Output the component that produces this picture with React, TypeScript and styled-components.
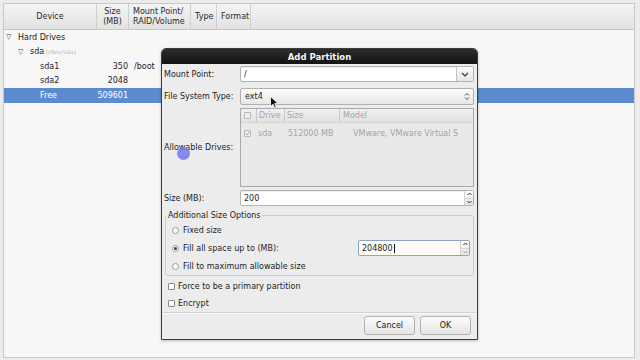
import React from "react";
import styled, { createGlobalStyle } from "styled-components";

const GlobalStyle = createGlobalStyle`
  html, body {
    margin: 0;
    padding: 0;
    background: #ececec;
    font-family: "DejaVu Sans", "Noto Sans", sans-serif;
    font-size: 8px;
    color: #1c1c1c;
  }
`;

const Screen = styled.div`
  position: relative;
  width: 640px;
  height: 360px;
  overflow: hidden;
  padding: 3px 5px 2px 3px;
  box-sizing: border-box;
`;

const Tree = styled.div`
  height: 100%;
  border: 1px solid #c8c8c8;
  background: #f7f7f7;
  box-sizing: border-box;
`;

const COLS = "93px 32px 62px 26px 34px 1fr";

const Header = styled.div`
  display: grid;
  grid-template-columns: ${COLS};
  height: 25px;
  background: linear-gradient(#f4f4f4, #e2e2e2);
  border-bottom: 1px solid #c6c6c6;
`;

const HeadCell = styled.div<{ $center?: boolean }>`
  display: flex;
  align-items: center;
  justify-content: ${({ $center }) => ($center ? "center" : "flex-start")};
  text-align: ${({ $center }) => ($center ? "center" : "left")};
  padding-left: ${({ $center }) => ($center ? "0" : "4px")};
  border-right: 1px solid #cfcfcf;
  line-height: 10px;
  color: #2a2a2a;
  &:last-child {
    border-right: none;
  }
`;

const Row = styled.div<{ $selected?: boolean }>`
  display: grid;
  grid-template-columns: ${COLS};
  height: 14.5px;
  align-items: center;
  background: ${({ $selected }) => ($selected ? "#5c8ccf" : "transparent")};
  color: ${({ $selected }) => ($selected ? "#ffffff" : "#1c1c1c")};
`;

const Name = styled.div<{ $indent: number }>`
  display: flex;
  align-items: center;
  gap: 5px;
  padding-left: ${({ $indent }) => $indent}px;
  white-space: nowrap;
`;

const Expander = styled.span`
  font-size: 7px;
  color: #444;
  width: 7px;
`;

const Dim = styled.span`
  color: #b8b8b8;
  font-size: 6px;
  margin-left: -1px;
`;

const Num = styled.div`
  text-align: right;
  padding-right: 1px;
`;

const Mount = styled.div`
  padding-left: 5px;
`;

/* dialog */

const Dialog = styled.div`
  position: absolute;
  left: 161px;
  top: 48px;
  width: 317px;
  height: 292px;
  box-sizing: border-box;
  border: 1px solid #3c3c3c;
  border-radius: 5px 5px 0 0;
  background: #ececec;
  display: flex;
  flex-direction: column;
  box-shadow: 0 1px 3px rgba(0, 0, 0, 0.25);
`;

const TitleBar = styled.div`
  height: 15px;
  background: linear-gradient(#2c2c2c, #141414);
  color: #f4f4f4;
  font-weight: bold;
  font-size: 8.5px;
  display: flex;
  align-items: center;
  justify-content: center;
  border-radius: 4px 4px 0 0;
`;

const Body = styled.div`
  flex: 1;
  padding: 2px 3px 0 2px;
  display: flex;
  flex-direction: column;
`;

const FieldRow = styled.div<{ $h: number; $mt?: number }>`
  display: grid;
  grid-template-columns: 76px 1fr;
  align-items: center;
  height: ${({ $h }) => $h}px;
  margin-top: ${({ $mt }) => $mt ?? 0}px;
`;

const Label = styled.div`
  white-space: nowrap;
`;

const Entry = styled.div`
  height: 100%;
  display: flex;
  box-sizing: border-box;
  border: 1px solid #b4b4b4;
  border-radius: 2px;
  background: #ffffff;
  box-shadow: inset 0 1px 1px rgba(0, 0, 0, 0.08);
`;

const EntryText = styled.div`
  flex: 1;
  display: flex;
  align-items: center;
  padding-left: 3px;
`;

const DropButton = styled.div`
  width: 16px;
  border-left: 1px solid #c4c4c4;
  background: linear-gradient(#fafafa, #e6e6e6);
  display: flex;
  align-items: center;
  justify-content: center;
`;

const ComboButton = styled.div`
  height: 100%;
  box-sizing: border-box;
  border: 1px solid #b0b0b0;
  border-radius: 2px;
  background: linear-gradient(#fbfbfb, #e7e7e7);
  display: flex;
  align-items: center;
  justify-content: space-between;
  padding: 0 3px 0 4px;
`;

const SpinButtons = styled.div`
  width: 8px;
  display: flex;
  flex-direction: column;
  border-left: 1px solid #d0d0d0;
  background: linear-gradient(#fafafa, #e4e4e4);
`;

const SpinHalf = styled.div<{ $dim?: boolean }>`
  flex: 1;
  display: flex;
  align-items: center;
  justify-content: center;
  opacity: ${({ $dim }) => ($dim ? 0.4 : 1)};
  &:first-child {
    border-bottom: 1px solid #d8d8d8;
  }
`;

const DrivesBox = styled.div`
  height: 100%;
  box-sizing: border-box;
  border: 1px solid #a9a9a9;
  background: #e9e9e9;
  color: #a4a4a4;
`;

const DrivesCols = "15px 28px 55px 1fr";

const DrivesHead = styled.div`
  display: grid;
  grid-template-columns: ${DrivesCols};
  height: 13px;
  align-items: center;
  background: linear-gradient(#f0f0f0, #e2e2e2);
  border-bottom: 1px solid #d4d4d4;
`;

const DrivesRow = styled.div`
  display: grid;
  grid-template-columns: ${DrivesCols};
  height: 20px;
  align-items: center;
  white-space: nowrap;
  overflow: hidden;
`;

const DCell = styled.div<{ $sep?: boolean; $pl?: number }>`
  display: flex;
  align-items: center;
  height: 100%;
  padding-left: ${({ $pl }) => $pl ?? 2}px;
  border-left: ${({ $sep }) => ($sep ? "1px solid #c8c8c8" : "none")};
  overflow: hidden;
  white-space: nowrap;
`;

const Check = styled.span<{ $dim?: boolean }>`
  display: inline-flex;
  align-items: center;
  justify-content: center;
  width: 7px;
  height: 7px;
  box-sizing: border-box;
  border: 1px solid ${({ $dim }) => ($dim ? "#b8b8b8" : "#8a8a8a")};
  border-radius: 1px;
  background: ${({ $dim }) => ($dim ? "#efefef" : "#fdfdfd")};
  flex-shrink: 0;
`;

const Frame = styled.fieldset`
  margin: 5px 0 0 1px;
  padding: 2px 0 0 6px;
  height: 65px;
  box-sizing: border-box;
  border: 1px solid #cdcdcd;
  border-radius: 3px;
  display: flex;
  flex-direction: column;
  min-width: 0;
  legend {
    padding: 0 1px;
    margin-left: -5px;
    color: #1c1c1c;
  }
`;

const OptionRow = styled.div<{ $h: number }>`
  display: flex;
  align-items: center;
  height: ${({ $h }) => $h}px;
  gap: 4px;
  white-space: nowrap;
`;

const Radio = styled.span<{ $on?: boolean }>`
  width: 7px;
  height: 7px;
  box-sizing: border-box;
  border-radius: 50%;
  border: 1px solid #9a9a9a;
  background: #fcfcfc;
  display: inline-flex;
  align-items: center;
  justify-content: center;
  &::after {
    content: "";
    display: ${({ $on }) => ($on ? "block" : "none")};
    width: 3px;
    height: 3px;
    border-radius: 50%;
    background: #333;
  }
`;

const FillSpin = styled.div`
  margin-left: auto;
  margin-right: 3px;
  width: 112px;
  height: 16px;
  box-sizing: border-box;
  display: flex;
  border: 1px solid #8ea6c4;
  border-radius: 2px;
  background: #fdfcf6;
`;

const Caret = styled.span`
  display: inline-block;
  width: 1px;
  height: 9px;
  background: #111;
  margin-left: 1px;
`;

const CheckRow = styled.div<{ $mt: number }>`
  display: flex;
  align-items: center;
  gap: 3px;
  margin-top: ${({ $mt }) => $mt}px;
  padding-left: 4px;
  height: 12px;
`;

const Separator = styled.div`
  margin-top: 3px;
  margin-left: -2px;
  margin-right: -3px;
  border-top: 1px solid #d2d2d2;
  border-bottom: 1px solid #fafafa;
`;

const ButtonBar = styled.div`
  display: flex;
  justify-content: flex-end;
  gap: 5px;
  padding: 2px 3px 0 0;
`;

const Button = styled.div`
  width: 51px;
  height: 19px;
  box-sizing: border-box;
  border: 1px solid #b2b2b2;
  border-radius: 3px;
  background: linear-gradient(#fcfcfc, #e4e4e4);
  display: flex;
  align-items: center;
  justify-content: center;
`;

const ClickDot = styled.div`
  position: absolute;
  left: 177px;
  top: 147px;
  width: 13px;
  height: 13px;
  border-radius: 50%;
  background: rgba(118, 118, 236, 0.85);
`;

const Pointer = styled.svg`
  position: absolute;
  left: 270px;
  top: 96px;
`;

const Chevron = () => (
  <svg width="8" height="5" viewBox="0 0 8 5">
    <path d="M1 1 L4 4 L7 1" fill="none" stroke="#333" strokeWidth="1.2" />
  </svg>
);

const UpDown = () => (
  <svg width="6" height="9" viewBox="0 0 6 9">
    <path d="M1 3.5 L3 1.5 L5 3.5 M1 5.5 L3 7.5 L5 5.5" fill="none" stroke="#444" strokeWidth="1" />
  </svg>
);

const Up = () => (
  <svg width="5" height="4" viewBox="0 0 5 4">
    <path d="M0.5 3 L2.5 1 L4.5 3" fill="none" stroke="#333" strokeWidth="1" />
  </svg>
);

const Down = () => (
  <svg width="5" height="4" viewBox="0 0 5 4">
    <path d="M0.5 1 L2.5 3 L4.5 1" fill="none" stroke="#333" strokeWidth="1" />
  </svg>
);

const Tick = () => (
  <svg width="5" height="5" viewBox="0 0 5 5">
    <path d="M0.6 2.6 L2 4 L4.5 0.6" fill="none" stroke="#9a9a9a" strokeWidth="1" />
  </svg>
);

export default function App() {
  return (
    <>
      <GlobalStyle />
      <Screen>
        <Tree>
          <Header>
            <HeadCell $center>Device</HeadCell>
            <HeadCell $center>
              Size
              <br />
              (MB)
            </HeadCell>
            <HeadCell>
              Mount Point/
              <br />
              RAID/Volume
            </HeadCell>
            <HeadCell>Type</HeadCell>
            <HeadCell>Format</HeadCell>
            <HeadCell />
          </Header>
          <Row>
            <Name $indent={2}>
              <Expander>▽</Expander>Hard Drives
            </Name>
          </Row>
          <Row>
            <Name $indent={14}>
              <Expander>▽</Expander>
              <span>
                sda <Dim>(/dev/sda)</Dim>
              </span>
            </Name>
          </Row>
          <Row>
            <Name $indent={36}>sda1</Name>
            <Num>350</Num>
            <Mount>/boot</Mount>
          </Row>
          <Row>
            <Name $indent={36}>sda2</Name>
            <Num>2048</Num>
          </Row>
          <Row $selected>
            <Name $indent={36}>Free</Name>
            <Num>509601</Num>
          </Row>
        </Tree>

        <Dialog>
          <TitleBar>Add Partition</TitleBar>
          <Body>
            <FieldRow $h={16}>
              <Label>Mount Point:</Label>
              <Entry>
                <EntryText>/</EntryText>
                <DropButton>
                  <Chevron />
                </DropButton>
              </Entry>
            </FieldRow>
            <FieldRow $h={17} $mt={6}>
              <Label>File System Type:</Label>
              <ComboButton>
                <span>ext4</span>
                <UpDown />
              </ComboButton>
            </FieldRow>
            <FieldRow $h={79} $mt={3}>
              <Label>Allowable Drives:</Label>
              <DrivesBox>
                <DrivesHead>
                  <DCell $pl={3}>
                    <Check $dim />
                  </DCell>
                  <DCell $sep>Drive</DCell>
                  <DCell $sep>Size</DCell>
                  <DCell $sep $pl={3}>Model</DCell>
                </DrivesHead>
                <DrivesRow>
                  <DCell $pl={3}>
                    <Check $dim>
                      <Tick />
                    </Check>
                  </DCell>
                  <DCell>sda</DCell>
                  <DCell $pl={4}>512000 MB</DCell>
                  <DCell $pl={14}>VMware, VMware Virtual S</DCell>
                </DrivesRow>
              </DrivesBox>
            </FieldRow>
            <FieldRow $h={16} $mt={3}>
              <Label>Size (MB):</Label>
              <Entry>
                <EntryText>200</EntryText>
                <SpinButtons>
                  <SpinHalf>
                    <Up />
                  </SpinHalf>
                  <SpinHalf>
                    <Down />
                  </SpinHalf>
                </SpinButtons>
              </Entry>
            </FieldRow>
            <Frame>
              <legend>Additional Size Options</legend>
              <OptionRow $h={16}>
                <Radio />
                Fixed size
              </OptionRow>
              <OptionRow $h={20}>
                <Radio $on />
                Fill all space up to (MB):
                <FillSpin>
                  <EntryText>
                    204800
                    <Caret />
                  </EntryText>
                  <SpinButtons>
                    <SpinHalf>
                      <Up />
                    </SpinHalf>
                    <SpinHalf $dim>
                      <Down />
                    </SpinHalf>
                  </SpinButtons>
                </FillSpin>
              </OptionRow>
              <OptionRow $h={16}>
                <Radio />
                Fill to maximum allowable size
              </OptionRow>
            </Frame>
            <CheckRow $mt={4}>
              <Check />
              Force to be a primary partition
            </CheckRow>
            <CheckRow $mt={5}>
              <Check />
              Encrypt
            </CheckRow>
            <Separator />
            <ButtonBar>
              <Button>Cancel</Button>
              <Button>OK</Button>
            </ButtonBar>
          </Body>
        </Dialog>

        <ClickDot />
        <Pointer width="9" height="13" viewBox="0 0 9 13">
          <path d="M0.5 0.5 L0.5 10.5 L3 8.2 L4.8 12 L6.3 11.3 L4.6 7.6 L8 7.6 Z" fill="#111" stroke="#fff" strokeWidth="0.8" />
        </Pointer>
      </Screen>
    </>
  );
}
